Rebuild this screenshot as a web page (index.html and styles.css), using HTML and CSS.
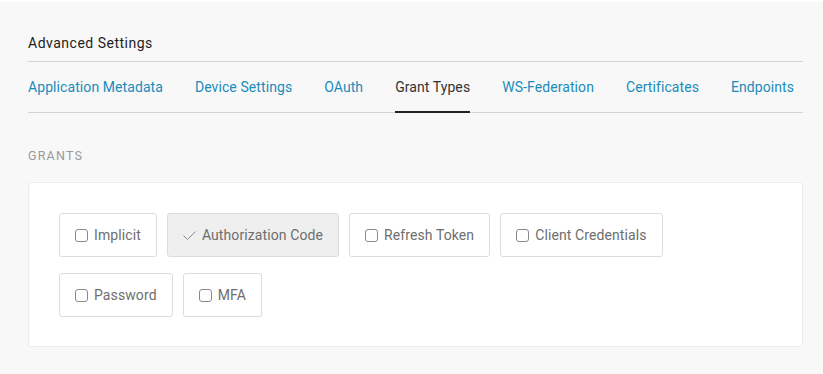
FILE: index.html
```html
<!DOCTYPE html>
<html>
<head>
  <title>Advanced Settings</title>
  <link rel="stylesheet" href="styles.css">
</head>
<body>
  <div class="page">
    <h2 class="section-title">Advanced Settings</h2>
    <!-- Tabs -->
    <ul class="tabs">
      <li class="tab">Application Metadata</li>
      <li class="tab">Device Settings</li>
      <li class="tab">OAuth</li>
      <li class="tab active">Grant Types</li>
      <li class="tab">WS-Federation</li>
      <li class="tab">Certificates</li>
      <li class="tab">Endpoints</li>
    </ul>
    <div class="label">GRANTS</div>
    <!-- Grant checkboxes -->
    <div class="card">
      <div class="grant"><span class="box"></span>Implicit</div>
      <div class="grant checked">
        <svg class="tick" width="13" height="9" viewBox="0 0 13 9"><path d="M0.5 4.5 L4.5 8.5 L12.5 0.5" fill="none" stroke="#888" stroke-width="1"/></svg>Authorization Code
      </div>
      <div class="grant"><span class="box"></span>Refresh Token</div>
      <div class="grant"><span class="box"></span>Client Credentials</div>
      <div class="grant"><span class="box"></span>Password</div>
      <div class="grant"><span class="box"></span>MFA</div>
    </div>
  </div>
</body>
</html>
```

FILE: styles.css
```css
/*Page*/
body {
  margin: 0;
  background-color: #f8f8f8;
  border-top: 2px solid #fff;
  font-family: Roboto, "Liberation Sans", sans-serif;
}
.page {
  padding: 32px 20px 0 28px;
}
/*Heading*/
.section-title {
  margin: 0;
  padding-bottom: 9px;
  font-size: 14px;
  line-height: 18px;
  font-weight: 400;
  letter-spacing: 0.5px;
  color: #222;
  border-bottom: 1px solid #d4d4d4;
}
/*Tabs*/
.tabs {
  display: flex;
  gap: 32px;
  margin: 0;
  padding: 0;
  list-style: none;
  border-bottom: 1px solid #d4d4d4;
}
.tab {
  padding: 16px 0 15px;
  margin-bottom: -1px;
  font-size: 14px;
  line-height: 18px;
  letter-spacing: 0.08px;
  color: #1a8cbc;
  border-bottom: 2px solid transparent;
}
.tab.active {
  color: #333;
  border-bottom-color: #222;
}
/*Grants label*/
.label {
  margin: 35px 0 18px;
  font-size: 12.5px;
  line-height: 16px;
  letter-spacing: 1.2px;
  color: #999;
}
/*Card*/
.card {
  display: flex;
  flex-wrap: wrap;
  gap: 16px 10px;
  padding: 30px 30px 29px;
  background-color: #fff;
  border: 1px solid #ececec;
  border-radius: 3px;
}
.grant {
  display: flex;
  align-items: center;
  height: 42px;
  padding: 0 15px;
  border: 1px solid #dcdcdc;
  border-radius: 3px;
  font-size: 14px;
  letter-spacing: 0.1px;
  color: #6e6e6e;
}
.grant.checked {
  background-color: #efefef;
}
.box {
  width: 11px;
  height: 11px;
  margin-right: 6px;
  border: 1px solid #8a8a8a;
  border-radius: 3px;
}
.tick {
  margin-right: 6px;
}
```
